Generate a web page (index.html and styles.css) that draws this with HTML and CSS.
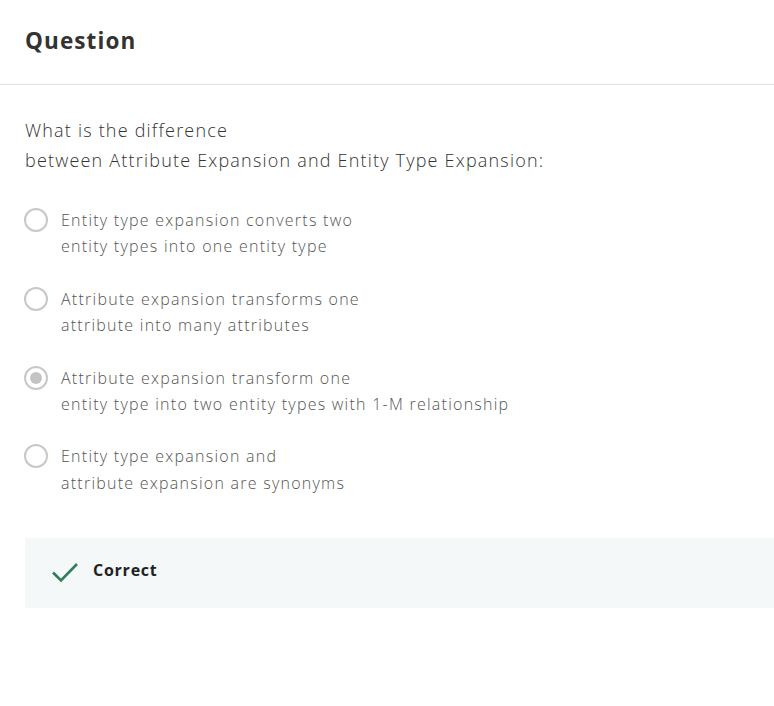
FILE: index.html
```html
<!DOCTYPE html>
<html>
<head>
<meta charset="utf-8">
<link rel="stylesheet" href="styles.css">
</head>
<body>
<header class="header"><h1 class="title">Question</h1></header>
<main class="content">
  <p class="question">What is the difference<br>between Attribute Expansion and Entity Type Expansion:</p>
  <ul class="options">
    <li class="option"><span class="radio"></span><span class="label">Entity type expansion converts two<br>entity types into one entity type</span></li>
    <li class="option"><span class="radio"></span><span class="label">Attribute expansion transforms one<br>attribute into many attributes</span></li>
    <li class="option"><span class="radio checked"></span><span class="label">Attribute expansion transform one<br>entity type into two entity types with 1-M relationship</span></li>
    <li class="option"><span class="radio"></span><span class="label">Entity type expansion and<br>attribute expansion are synonyms</span></li>
  </ul>
  <div class="feedback">
    <svg class="check" width="28" height="22" viewBox="0 0 28 22"><path d="M2 11.5 L10 19.5 L26 3" fill="none" stroke="#2e7d5b" stroke-width="2.6"/></svg>
    <span class="feedback-text">Correct</span>
  </div>
</main>
</body>
</html>
```
FILE: styles.css
```css
html, body { margin: 0; padding: 0; background: #fff; }
body { font-family: "Open Sans", sans-serif; color: #333; }
.header { height: 84px; border-bottom: 1px solid #e1e1e1; box-sizing: content-box; padding: 0 25px; }
.title { margin: 0; padding-top: 26px; font-size: 22.5px; line-height: 30px; font-weight: 700; color: #333; letter-spacing: 1.1px; }
.content { padding-left: 25px; }
.question { margin: 30px 0 32px; font-size: 18px; line-height: 30px; font-weight: 300; letter-spacing: 1.2px; color: #333; }
.options { list-style: none; margin: 0; padding: 0; display: flex; flex-direction: column; gap: 26px; }
.option { display: flex; align-items: flex-start; gap: 13px; font-size: 16px; line-height: 1.65; font-weight: 300; letter-spacing: 1.25px; color: #555; }
.radio { flex: none; width: 20px; height: 20px; border: 2px solid #c8c8c8; border-radius: 50%; margin-top: 1px; margin-left: -1px; display: flex; align-items: center; justify-content: center; }
.radio.checked::after { content: ""; width: 12px; height: 12px; border-radius: 50%; background: #c4c4c4; }
.label { display: block; }
.feedback { margin-top: 42px; height: 70px; background: #f5f8f8; display: flex; align-items: center; padding-left: 26px; gap: 14px; }
.check { flex: none; margin-bottom: 2px; }
.feedback-text { font-size: 16px; font-weight: 700; letter-spacing: 0.75px; color: #222; margin-bottom: 7px; }
```
